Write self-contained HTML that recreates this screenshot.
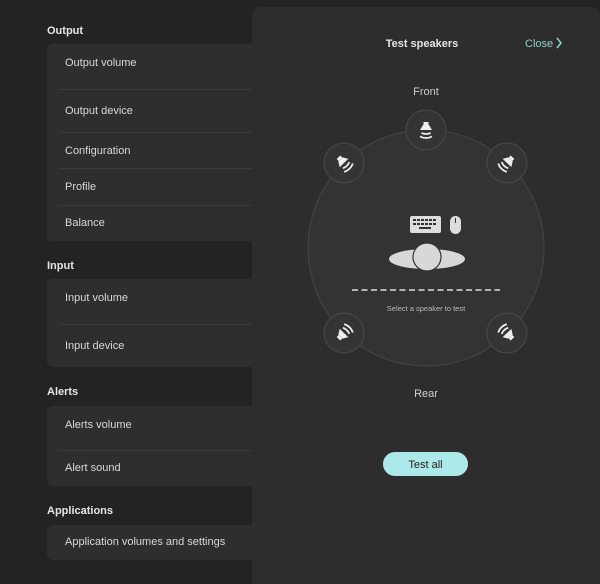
<!DOCTYPE html>
<html style="overflow:hidden;height:584px"><head><style>
body{margin:0;width:600px;height:584px;background:#232323;font-family:"Liberation Sans",sans-serif;position:relative;overflow:hidden;color:#ddd}
.h{position:absolute;left:47px;font-size:11px;font-weight:bold;color:#e6e6e6}
.card{position:absolute;left:47px;width:230px;background:#2e2e2e;border-radius:6px}
.t{position:absolute;left:65px;font-size:11px;color:#d8d8d8}
.sep{position:absolute;left:59px;width:200px;height:1px;background:#3c3c3c}
.panel{position:absolute;left:252px;top:7px;width:348px;height:577px;background:#2d2d2d;border-radius:8px 8px 0 0}
</style></head><body>
<div class="h" style="top:25px">Output</div>
<div class="card" style="top:44px;height:197px"></div>
<div class="t" style="top:57px">Output volume</div><div class="sep" style="top:89px"></div>
<div class="t" style="top:105px">Output device</div><div class="sep" style="top:132px"></div>
<div class="t" style="top:145px">Configuration</div><div class="sep" style="top:168px"></div>
<div class="t" style="top:181px">Profile</div><div class="sep" style="top:205px"></div>
<div class="t" style="top:217px">Balance</div>
<div class="h" style="top:260px">Input</div>
<div class="card" style="top:279px;height:88px"></div>
<div class="t" style="top:292px">Input volume</div><div class="sep" style="top:324px"></div>
<div class="t" style="top:340px">Input device</div>
<div class="h" style="top:386px">Alerts</div>
<div class="card" style="top:406px;height:80px"></div>
<div class="t" style="top:419px">Alerts volume</div><div class="sep" style="top:450px"></div>
<div class="t" style="top:462px">Alert sound</div>
<div class="h" style="top:505px">Applications</div>
<div class="card" style="top:525px;height:35px"></div>
<div class="t" style="top:536px">Application volumes and settings</div>
<div class="panel"></div>
<svg width="600" height="584" style="position:absolute;left:0;top:0" font-family="Liberation Sans, sans-serif">
<defs>
<g id="spk">
<rect x="-2.5" y="-8" width="5" height="3" fill="#eee"/>
<path d="M-3 -5 L3 -5 L6 0 L-6 0 Z" fill="#eee"/>
<path d="M-4.5 3 Q0 5 4.5 3" stroke="#eee" stroke-width="1.8" fill="none"/>
<path d="M-6 6.5 Q0 9.5 6 6.5" stroke="#eee" stroke-width="1.8" fill="none"/>
</g>
<g id="btn"><circle r="20" fill="#343434" stroke="#4a4a4a" stroke-width="1"/></g>
</defs>
<text x="422" y="47" font-size="11" font-weight="bold" fill="#e6e6e6" text-anchor="middle">Test speakers</text>
<text x="525" y="47" font-size="11" fill="#8fd0d2">Close</text>
<path d="M557 38 L561 43 L557 48" stroke="#8fd0d2" stroke-width="1.6" fill="none"/>
<text x="426" y="95" font-size="11" fill="#cfcfcf" text-anchor="middle">Front</text>
<circle cx="426" cy="248" r="118" fill="#333" stroke="#474747"/>
<g transform="translate(426,130)"><use href="#btn"/><use href="#spk"/></g>
<g transform="translate(344,163)"><use href="#btn"/><g transform="rotate(-44)"><use href="#spk"/></g></g>
<g transform="translate(507,163)"><use href="#btn"/><g transform="rotate(44)"><use href="#spk"/></g></g>
<g transform="translate(344,333)"><use href="#btn"/><g transform="rotate(-136)"><use href="#spk"/></g></g>
<g transform="translate(507,333)"><use href="#btn"/><g transform="rotate(136)"><use href="#spk"/></g></g>
<rect x="410" y="216" width="31" height="17" rx="2" fill="#ddd"/>
<g fill="#333">
<rect x="413" y="219" width="3" height="2"/><rect x="417" y="219" width="3" height="2"/><rect x="421" y="219" width="3" height="2"/><rect x="425" y="219" width="3" height="2"/><rect x="429" y="219" width="3" height="2"/><rect x="433" y="219" width="3" height="2"/>
<rect x="413" y="223" width="3" height="2"/><rect x="417" y="223" width="3" height="2"/><rect x="421" y="223" width="3" height="2"/><rect x="425" y="223" width="3" height="2"/><rect x="429" y="223" width="3" height="2"/><rect x="433" y="223" width="3" height="2"/>
<rect x="419" y="227" width="12" height="2"/></g>
<rect x="450" y="216" width="11" height="18" rx="5.5" fill="#ddd"/>
<line x1="455.5" y1="218" x2="455.5" y2="223" stroke="#333"/>
<ellipse cx="427" cy="259" rx="38" ry="10" fill="#d8d8d8"/>
<circle cx="427" cy="257" r="14" fill="#d8d8d8" stroke="#333" stroke-width="1.2"/>
<line x1="352" y1="290" x2="500" y2="290" stroke="#ddd" stroke-width="1.5" stroke-dasharray="6,3.5"/>
<text x="426" y="311" font-size="7.5" fill="#bbb" text-anchor="middle">Select a speaker to test</text>
<text x="426" y="397" font-size="11" fill="#cfcfcf" text-anchor="middle">Rear</text>
<rect x="383" y="452" width="85" height="24" rx="12" fill="#ade8ea"/>
<text x="425.5" y="468" font-size="11" fill="#222" text-anchor="middle">Test all</text>
</svg>
</body></html>
